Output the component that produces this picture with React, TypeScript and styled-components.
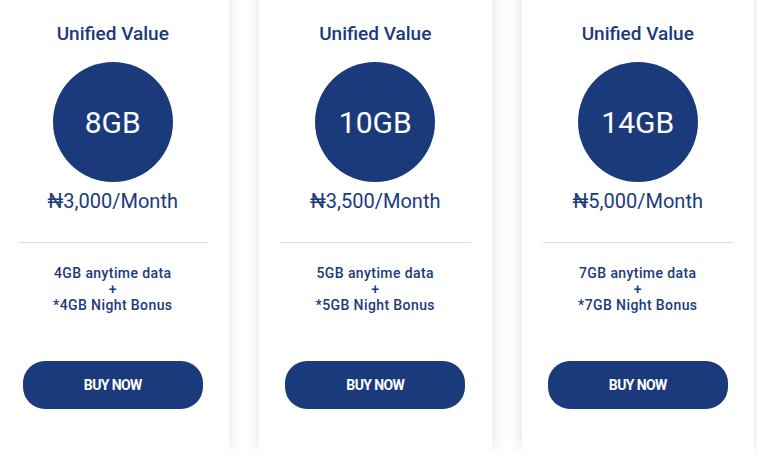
import React from "react";
import styled, { createGlobalStyle } from "styled-components";

const Global = createGlobalStyle`
  html, body { margin: 0; padding: 0; background: #ffffff; overflow: hidden; }
  body { font-family: Roboto, "Liberation Sans", Arial, sans-serif; }
`;

const NAVY = "#1b3a7c";

const Row = styled.div`
  display: flex;
  gap: 30px;
  margin-left: -3.5px;
  margin-top: -20px;
`;

const Card = styled.div`
  flex: 0 0 232.5px;
  box-sizing: border-box;
  background: #fff;
  padding: 43px 21px 41px;
  box-shadow: 0 2px 14px rgba(0, 0, 0, 0.12);
  display: flex;
  flex-direction: column;
  align-items: center;
`;

const Title = styled.h3`
  margin: 0;
  font-size: 19px;
  line-height: 22px;
  font-weight: 500;
  color: ${NAVY};
`;

const Circle = styled.div`
  margin-top: 17px;
  width: 120px;
  height: 120px;
  border-radius: 50%;
  background: ${NAVY};
  color: #fff;
  display: flex;
  align-items: center;
  justify-content: center;
  font-size: 30px;
  font-weight: 400;
`;

const Price = styled.div`
  margin-top: 8px;
  font-size: 20px;
  line-height: 22px;
  color: ${NAVY};
`;

const Divider = styled.hr`
  align-self: stretch;
  margin: 30px 0 0;
  border: 0;
  border-top: 1px solid #dcdcdc;
`;

const Desc = styled.div`
  margin-top: 22px;
  font-size: 14px;
  line-height: 16px;
  letter-spacing: 0.4px;
  font-weight: 500;
  color: ${NAVY};
  text-align: center;
`;

const Button = styled.button`
  margin-top: 48px;
  width: 180px;
  height: 48px;
  border: 0;
  border-radius: 22px;
  background: ${NAVY};
  color: #fff;
  font-family: Roboto, "Liberation Sans", Arial, sans-serif;
  font-size: 14px;
  font-weight: 700;
  letter-spacing: -0.6px;
  cursor: pointer;
`;

const plans = [
  { gb: "8GB", price: "₦3,000/Month", data: "4GB" },
  { gb: "10GB", price: "₦3,500/Month", data: "5GB" },
  { gb: "14GB", price: "₦5,000/Month", data: "7GB" },
];

export default function App() {
  return (
    <>
      <Global />
      <Row>
        {plans.map((p) => (
          <Card key={p.gb}>
            <Title>Unified Value</Title>
            <Circle>{p.gb}</Circle>
            <Price>{p.price}</Price>
            <Divider />
            <Desc>
              {p.data} anytime data
              <br />+<br />*{p.data} Night Bonus
            </Desc>
            <Button>BUY NOW</Button>
          </Card>
        ))}
      </Row>
    </>
  );
}
